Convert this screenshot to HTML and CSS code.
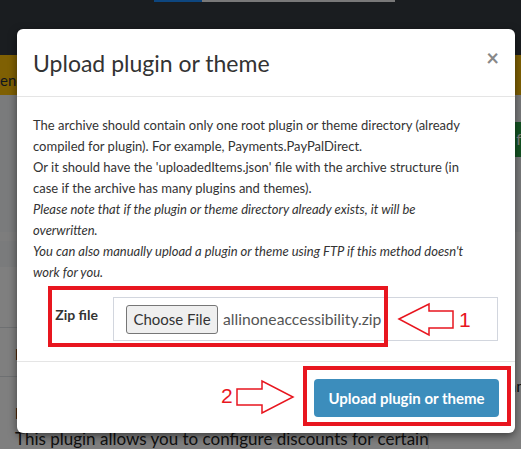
FILE: index.html
```html
<!DOCTYPE html>
<html>
<head>
<meta charset="utf-8">
<link rel="stylesheet" href="styles.css">
</head>
<body>
<div class="page">
  <header class="topbar">
    <div class="search"><span class="search-btn"></span><span class="search-field"></span></div>
  </header>
  <div class="notice">encryption key is not set for the store</div>
  <div class="content">
    <div class="actions"><span class="btn-green">check for updates</span></div>
    <div class="grid">
      <div class="col-left">
        <div class="spacer"></div>
        <div class="card">
          <div class="row"></div>
          <div class="row"><span class="row-title">Icon</span></div>
          <div class="row"><span class="row-title">Discount rules</span><p class="row-desc">This plugin allows you to configure discounts for certain</p></div>
        </div>
      </div>
      <div class="col-right">
        <div class="side-card">
          <span class="row-title">info</span>
          <span class="side-line">Configure</span>
          <span class="side-line">plugin</span>
          <span class="side-line">Custom name</span>
        </div>
      </div>
    </div>
  </div>
</div>
<div class="backdrop"></div>
<div class="modal">
  <div class="modal-header">
    <h4 class="modal-title">Upload plugin or theme</h4>
    <span class="close">×</span>
  </div>
  <div class="modal-body">
    <p class="intro">The archive should contain only one root plugin or theme directory (already<br>compiled for plugin). For example, Payments.PayPalDirect.<br>Or it should have the 'uploadedItems.json' file with the archive structure (in<br>case if the archive has many plugins and themes).<br><em>Please note that if the plugin or theme directory already exists, it will be<br>overwritten.</em><br><em>You can also manually upload a plugin or theme using FTP if this method doesn't<br>work for you.</em></p>
    <div class="form-row">
      <label class="form-label">Zip file</label>
      <div class="file-box">
        <span class="file-btn">Choose File</span>
        <span class="file-name">allinoneaccessibility.zip</span>
      </div>
    </div>
  </div>
  <div class="modal-footer">
    <span class="btn-primary">Upload plugin or theme</span>
  </div>
  <div class="mark mark-1"></div>
  <div class="mark mark-2"></div>
  <svg class="arrow arrow-1" width="60" height="38" viewBox="0 0 60 38"><polygon points="3,19 33,4 33,11 57,11 57,28 33,28 33,35" fill="none" stroke="#e8161f" stroke-width="1.5"/></svg>
  <svg class="arrow arrow-2" width="62" height="38" viewBox="0 0 62 38"><polygon points="3,11 28,11 28,3 59,19 28,35 28,27 3,27" fill="none" stroke="#e8161f" stroke-width="1.5"/></svg>
  <span class="num num-1">1</span>
  <span class="num num-2">2</span>
</div>
</body>
</html>
```
FILE: styles.css
```css
* { box-sizing: border-box; }
html, body { margin: 0; padding: 0; }
body {
  width: 521px;
  height: 449px;
  overflow: hidden;
  font-family: "Lato", "Open Sans", sans-serif;
  color: #333;
  position: relative;
}
.page { width: 521px; height: 449px; display: flex; flex-direction: column; background: #f4f6f9; overflow: hidden; }
.topbar { height: 55px; background: #343a40; flex: none; }
.search { display: flex; margin-left: 154px; height: 2px; }
.search-btn { width: 48px; background: #1a8cff; }
.search-field { width: 193px; background: #f2f2f2; }
.notice {
  height: 40px; flex: none; background: #ffc107; color: #1f2d3d;
  font-size: 15px; line-height: 40px; padding-top: 5px; white-space: nowrap; overflow: hidden;
}
.content { flex: 1; display: flex; flex-direction: column; }
.actions { display: flex; justify-content: flex-end; padding-top: 27px; margin-right: -80px; }
.btn-green { background: #28a745; color: #fff; height: 35px; line-height: 35px; padding: 0 10px; font-size: 15px; border-radius: 4px; }
.grid { display: flex; margin-top: 75px; flex: 1; }
.col-left { width: 427px; display: flex; flex-direction: column; }
.spacer { height: 35px; border-top: 9px solid #fbfbfb; }
.card { background: #fff; flex: 1; }
.row { border-bottom: 1px solid #dde1e5; padding: 0 15px; }
.row:nth-child(1) { height: 61px; }
.row:nth-child(2) { height: 49px; padding-top: 16px; }
.row:nth-child(3) { padding-top: 26px; border-bottom: 0; }
.row-title { font-weight: 700; font-size: 16px; color: #111; }
.row-desc { margin: 6px 0 0; font-size: 17px; color: #222; white-space: nowrap; }
.col-right { flex: 1; border-left: 1px solid #dde1e5; background: #fff; margin-left: 1px; overflow: hidden; }
.side-card { display: flex; flex-direction: column; padding: 72px 0 0 12px; }
.side-card .row-title { font-size: 18px; }
.side-line { font-size: 16px; color: #222; line-height: 24px; white-space: nowrap; }

.backdrop { position: absolute; inset: 0; background: rgba(0, 0, 0, 0.5); }

.modal {
  position: absolute; left: 17px; top: 29px; width: 498px;
  background: #fff; border-radius: 6px;
  box-shadow: 0 3px 9px rgba(0, 0, 0, 0.5);
}
.modal-header {
  height: 68px; display: flex; align-items: center; justify-content: space-between;
  padding: 0 16px; border-bottom: 1px solid #e5e5e5;
}
.modal-title { margin: 0; font-size: 23px; font-weight: 400; color: #333; }
.close { font-size: 22px; font-weight: 700; color: #888; margin-bottom: 10px; line-height: 1; }
.modal-body { padding: 18px 16px 20px; }
.intro { margin: 0; font-size: 13px; line-height: 21px; color: #333; white-space: nowrap; }
.form-row { display: flex; margin-top: 14px; }
.form-label { width: 80px; padding: 7px 15px 0 0; text-align: right; font-weight: 700; font-size: 14px; line-height: 21px; }
.file-box {
  width: 385px; height: 44px; border: 1px solid #d2d6de; display: flex; align-items: center;
  padding-left: 12px;
}
.file-btn {
  width: 92px; height: 29px; background: #efefef; border: 1px solid #767676; border-radius: 3px;
  font-size: 15px; display: flex; align-items: center; justify-content: center; color: #333;
}
.file-name { margin-left: 5px; font-size: 15.7px; color: #555; }
.modal-footer {
  border-top: 1px solid #e5e5e5; padding: 17px 16px 16px; display: flex; justify-content: flex-end;
}
.btn-primary {
  width: 185px; height: 38px; border-radius: 4px; background: #3c8dbc; color: #fff;
  font-size: 15px; font-weight: 700; display: flex; align-items: center; justify-content: center;
}
.mark { position: absolute; border: 4px solid #e8161f; }
.mark-1 { left: 31px; top: 257px; width: 340px; height: 61px; }
.mark-2 { left: 286px; top: 337px; width: 208px; height: 60px; }
.arrow { position: absolute; }
.arrow-1 { left: 379px; top: 271px; }
.arrow-2 { left: 217px; top: 349px; }
.num { position: absolute; color: #e8161f; font-family: "Liberation Sans", sans-serif; font-size: 21px; line-height: 1; }
.num-1 { left: 442px; top: 280px; }
.num-2 { left: 204px; top: 356px; }
```
